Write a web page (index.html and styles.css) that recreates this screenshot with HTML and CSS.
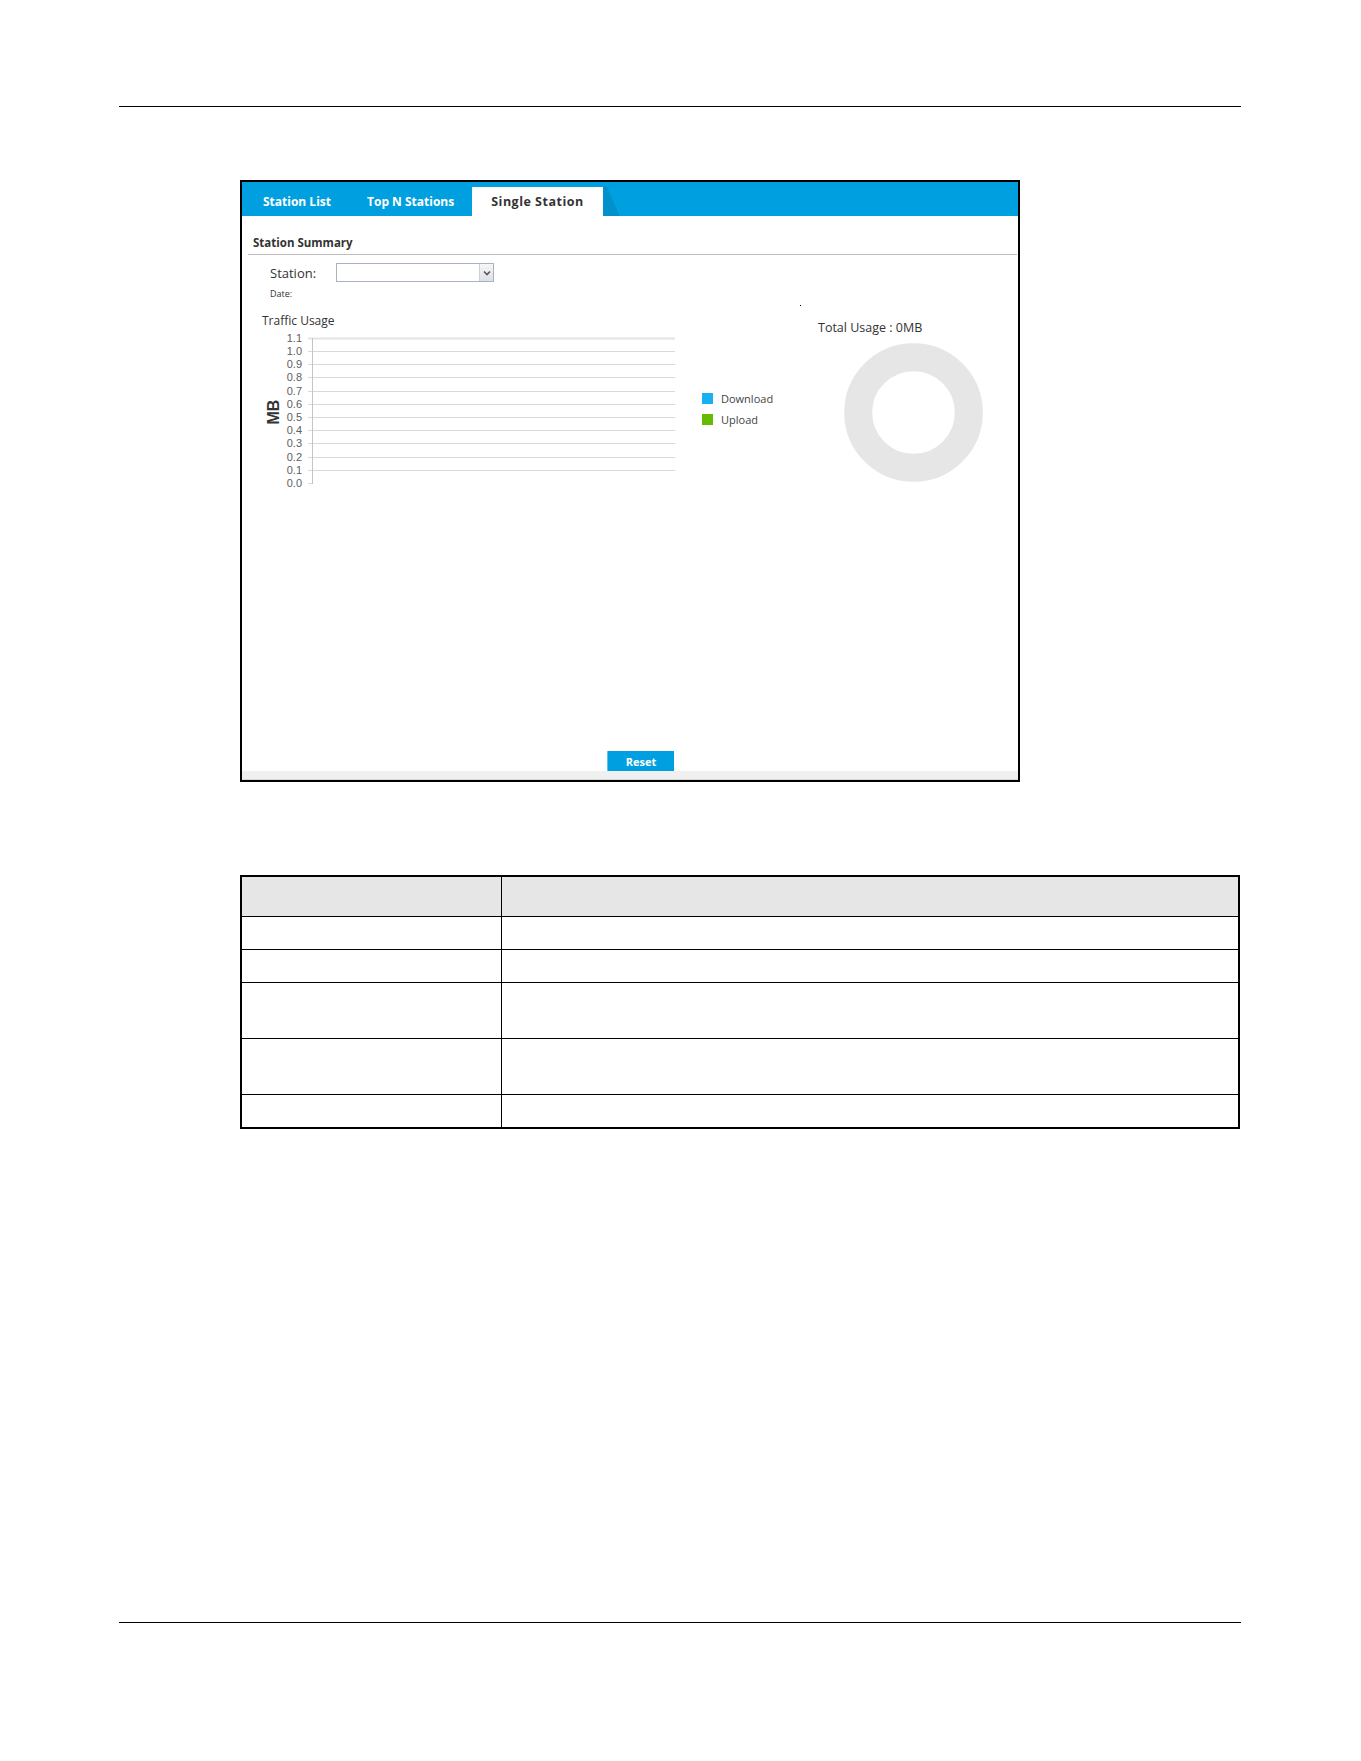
FILE: index.html
```html
<!DOCTYPE html>
<html lang="en">

<head>
  <meta charset="UTF-8">
  <title>Single Station</title>
  <link rel="stylesheet" href="styles.css">
</head>

<body>
  <div class="page-rule"></div>

  <!-- screenshot of the Single Station screen -->
  <div class="panel">
    <div class="tabbar">
      <span class="tab">Station List</span>
      <span class="tab">Top N Stations</span>
      <span class="tab active">Single Station</span>
      <span class="tab-shadow"></span>
    </div>

    <div class="panel-body">
      <div class="summary-title">Station Summary</div>

      <div class="station-row">
        <label class="station-label">Station:</label>
        <div class="select-box">
          <span class="select-arrow">
            <svg width="8" height="6" viewBox="0 0 8 6"><path d="M1 1.5 L4 4.5 L7 1.5" fill="none" stroke="#555" stroke-width="1.6"/></svg>
          </span>
        </div>
      </div>
      <div class="date-label">Date:</div>

      <div class="chart-row">
        <svg class="line-chart" width="440" height="190" viewBox="0 0 440 190">
          <text x="20" y="25" class="chart-title">Traffic Usage</text>
          <g class="grid">
            <line x1="66" y1="38.5" x2="433" y2="38.5" class="grid-top"/>
            <line x1="66" y1="51.5" x2="433" y2="51.5"/>
            <line x1="66" y1="64.5" x2="433" y2="64.5"/>
            <line x1="66" y1="77.5" x2="433" y2="77.5"/>
            <line x1="66" y1="91.5" x2="433" y2="91.5"/>
            <line x1="66" y1="104.5" x2="433" y2="104.5"/>
            <line x1="66" y1="117.5" x2="433" y2="117.5"/>
            <line x1="66" y1="130.5" x2="433" y2="130.5"/>
            <line x1="66" y1="143.5" x2="433" y2="143.5"/>
            <line x1="66" y1="157.5" x2="433" y2="157.5"/>
            <line x1="66" y1="170.5" x2="433" y2="170.5"/>
            <line x1="66" y1="183.5" x2="70" y2="183.5"/>
          </g>
          <line x1="70.5" y1="38" x2="70.5" y2="184" class="axis"/>
          <g class="ticks">
            <text x="60" y="42">1.1</text>
            <text x="60" y="55">1.0</text>
            <text x="60" y="68">0.9</text>
            <text x="60" y="81">0.8</text>
            <text x="60" y="95">0.7</text>
            <text x="60" y="108">0.6</text>
            <text x="60" y="121">0.5</text>
            <text x="60" y="134">0.4</text>
            <text x="60" y="147">0.3</text>
            <text x="60" y="161">0.2</text>
            <text x="60" y="174">0.1</text>
            <text x="60" y="187">0.0</text>
          </g>
          <text x="31" y="112" class="unit" transform="rotate(-90 31 112)">MB</text>
        </svg>

        <div class="legend">
          <div class="legend-item"><span class="swatch download"></span>Download</div>
          <div class="legend-item"><span class="swatch upload"></span>Upload</div>
        </div>

        <div class="usage">
          <span class="stray-dot"></span>
          <div class="usage-title">Total Usage : 0MB</div>
          <svg class="donut" width="139" height="139" viewBox="0 0 139 139">
            <circle cx="69.5" cy="69.5" r="55.3" fill="none" stroke="#e6e6e6" stroke-width="28"/>
          </svg>
        </div>
      </div>
    </div>

    <div class="button-row">
      <button type="button" class="reset-btn">Reset</button>
    </div>
    <div class="panel-foot"></div>
  </div>

  <!-- field description table -->
  <table class="desc-table">
    <tr class="head"><td class="col-label"></td><td></td></tr>
    <tr class="short"><td></td><td></td></tr>
    <tr class="short"><td></td><td></td></tr>
    <tr class="tall"><td></td><td></td></tr>
    <tr class="tall"><td></td><td></td></tr>
    <tr class="short"><td></td><td></td></tr>
  </table>

  <div class="page-rule footer-rule"></div>

  <div class="page-edge">
    <span class="edge-line"></span>
    <span class="edge-dots"></span>
  </div>
</body>

</html>
```

FILE: styles.css
```css
/* page frame */

html,
body {
  margin: 0;
  padding: 0;
  background-color: #fff;
  overflow: hidden;
}

body {
  width: 1361px;
  height: 1761px;
  font-family: "Open Sans", "DejaVu Sans", sans-serif;
  color: #333;
}

.page-rule {
  margin-top: 106px;
  margin-left: 119px;
  width: 1122px;
  border-top: 1px solid #000;
}

.footer-rule {
  margin-top: 493px;
}

.page-edge {
  display: flex;
  align-items: flex-end;
  margin-top: 139px;
  height: 1px;
}

.edge-line {
  width: 1194px;
  height: 1px;
  background-color: #000;
}

.edge-dots {
  margin-left: 4px;
  width: 125px;
  height: 1px;
  background: repeating-linear-gradient(90deg, #d33 0 2px, #36c 2px 4px, #bbb 4px 5px);
}

/* screenshot panel */

.panel {
  margin-top: 73px;
  margin-left: 240px;
  width: 780px;
  height: 602px;
  box-sizing: border-box;
  border: 2px solid #000;
  display: flex;
  flex-direction: column;
}

.tabbar {
  height: 34px;
  background-color: #009fdf;
  display: flex;
  align-items: flex-end;
  padding-left: 3px;
  flex-shrink: 0;
}

.tab {
  height: 29px;
  line-height: 29px;
  padding: 0 18px;
  color: #fff;
  font-weight: 700;
  font-size: 12px;
}

.tab.active {
  background-color: #fff;
  color: #333;
  padding: 0 19px 0 19px;
  font-size: 12.5px;
  letter-spacing: 0.5px;
}

.tab-shadow {
  width: 17px;
  height: 29px;
  background-color: #0090ca;
  clip-path: polygon(0 0, 25% 0, 100% 100%, 0 100%);
}

.panel-body {
  flex: 1;
}

.summary-title {
  margin: 19px 1px 0 6px;
  padding: 0 0 3px 5px;
  line-height: 16px;
  font-size: 11.5px;
  font-weight: 700;
  border-bottom: 1px solid #bdbdbd;
}

.station-row {
  display: flex;
  align-items: center;
  margin: 8px 0 0 28px;
  height: 19px;
}

.station-label {
  width: 66px;
  font-size: 13px;
}

.select-box {
  width: 158px;
  height: 19px;
  box-sizing: border-box;
  border: 1px solid #a8b3c2;
  display: flex;
  justify-content: flex-end;
}

.select-arrow {
  width: 13px;
  display: flex;
  align-items: center;
  justify-content: center;
  border-left: 1px solid #c9d0da;
  background: linear-gradient(#f7f7f7, #dcdfe4);
}

.date-label {
  margin: 6px 0 0 28px;
  font-size: 9px;
  line-height: 12px;
}

/* chart area */

.chart-row {
  display: flex;
}

.line-chart {
  display: block;
}

.chart-title {
  font-family: "Open Sans", "DejaVu Sans", sans-serif;
  font-size: 12px;
  fill: #333;
}

.grid line {
  stroke: #d9d9d9;
  stroke-width: 1;
}

.grid .grid-top {
  stroke: #e4e4e4;
  stroke-width: 2;
}

.axis {
  stroke: #c4c4c4;
  stroke-width: 1;
}

.ticks text {
  font-family: "Liberation Sans", Arial, sans-serif;
  font-size: 11px;
  fill: #606060;
  text-anchor: end;
}

.unit {
  font-family: "Liberation Sans", Arial, sans-serif;
  font-size: 16px;
  font-weight: 700;
  fill: #333;
  text-anchor: middle;
  dominant-baseline: central;
}

.legend {
  width: 98px;
  margin-left: 20px;
  padding-top: 92px;
}

.legend-item {
  display: flex;
  align-items: center;
  height: 13px;
  margin-bottom: 8px;
  font-size: 11px;
  color: #444;
}

.swatch {
  width: 11px;
  height: 11px;
  margin-right: 8px;
}

.swatch.download {
  background-color: #17b0f3;
}

.swatch.upload {
  background-color: #66bb00;
}

.usage {
  width: 218px;
  padding-top: 5px;
}

.stray-dot {
  display: block;
  width: 1px;
  height: 1px;
  background-color: #000;
}

.usage-title {
  margin: 13px 0 0 18px;
  line-height: 17px;
  font-size: 12.5px;
  color: #333;
}

.donut {
  display: block;
  margin: 7px 0 0 44px;
}

/* bottom of the panel */

.button-row {
  padding-left: 365px;
  height: 20px;
  flex-shrink: 0;
}

.reset-btn {
  display: block;
  width: 67px;
  height: 20px;
  padding: 0;
  border: none;
  border-left: 1px solid #5cc4ee;
  background-color: #00a0e0;
  color: #fff;
  font-family: "Open Sans", "DejaVu Sans", sans-serif;
  font-size: 11px;
  font-weight: 700;
}

.panel-foot {
  height: 9px;
  background-color: #f0f0f0;
  border-bottom: 1px solid #d6d6d6;
  box-sizing: border-box;
  flex-shrink: 0;
}

/* description table */

.desc-table {
  margin-top: 93px;
  margin-left: 240px;
  width: 1000px;
  border-collapse: collapse;
  border: 2px solid #000;
}

.desc-table td {
  border: 1px solid #000;
  padding: 0;
}

.desc-table .col-label {
  width: 259px;
}

.desc-table .head td {
  height: 39px;
  background-color: #e6e6e6;
}

.desc-table .short td {
  height: 32px;
}

.desc-table .tall td {
  height: 55px;
}
```
